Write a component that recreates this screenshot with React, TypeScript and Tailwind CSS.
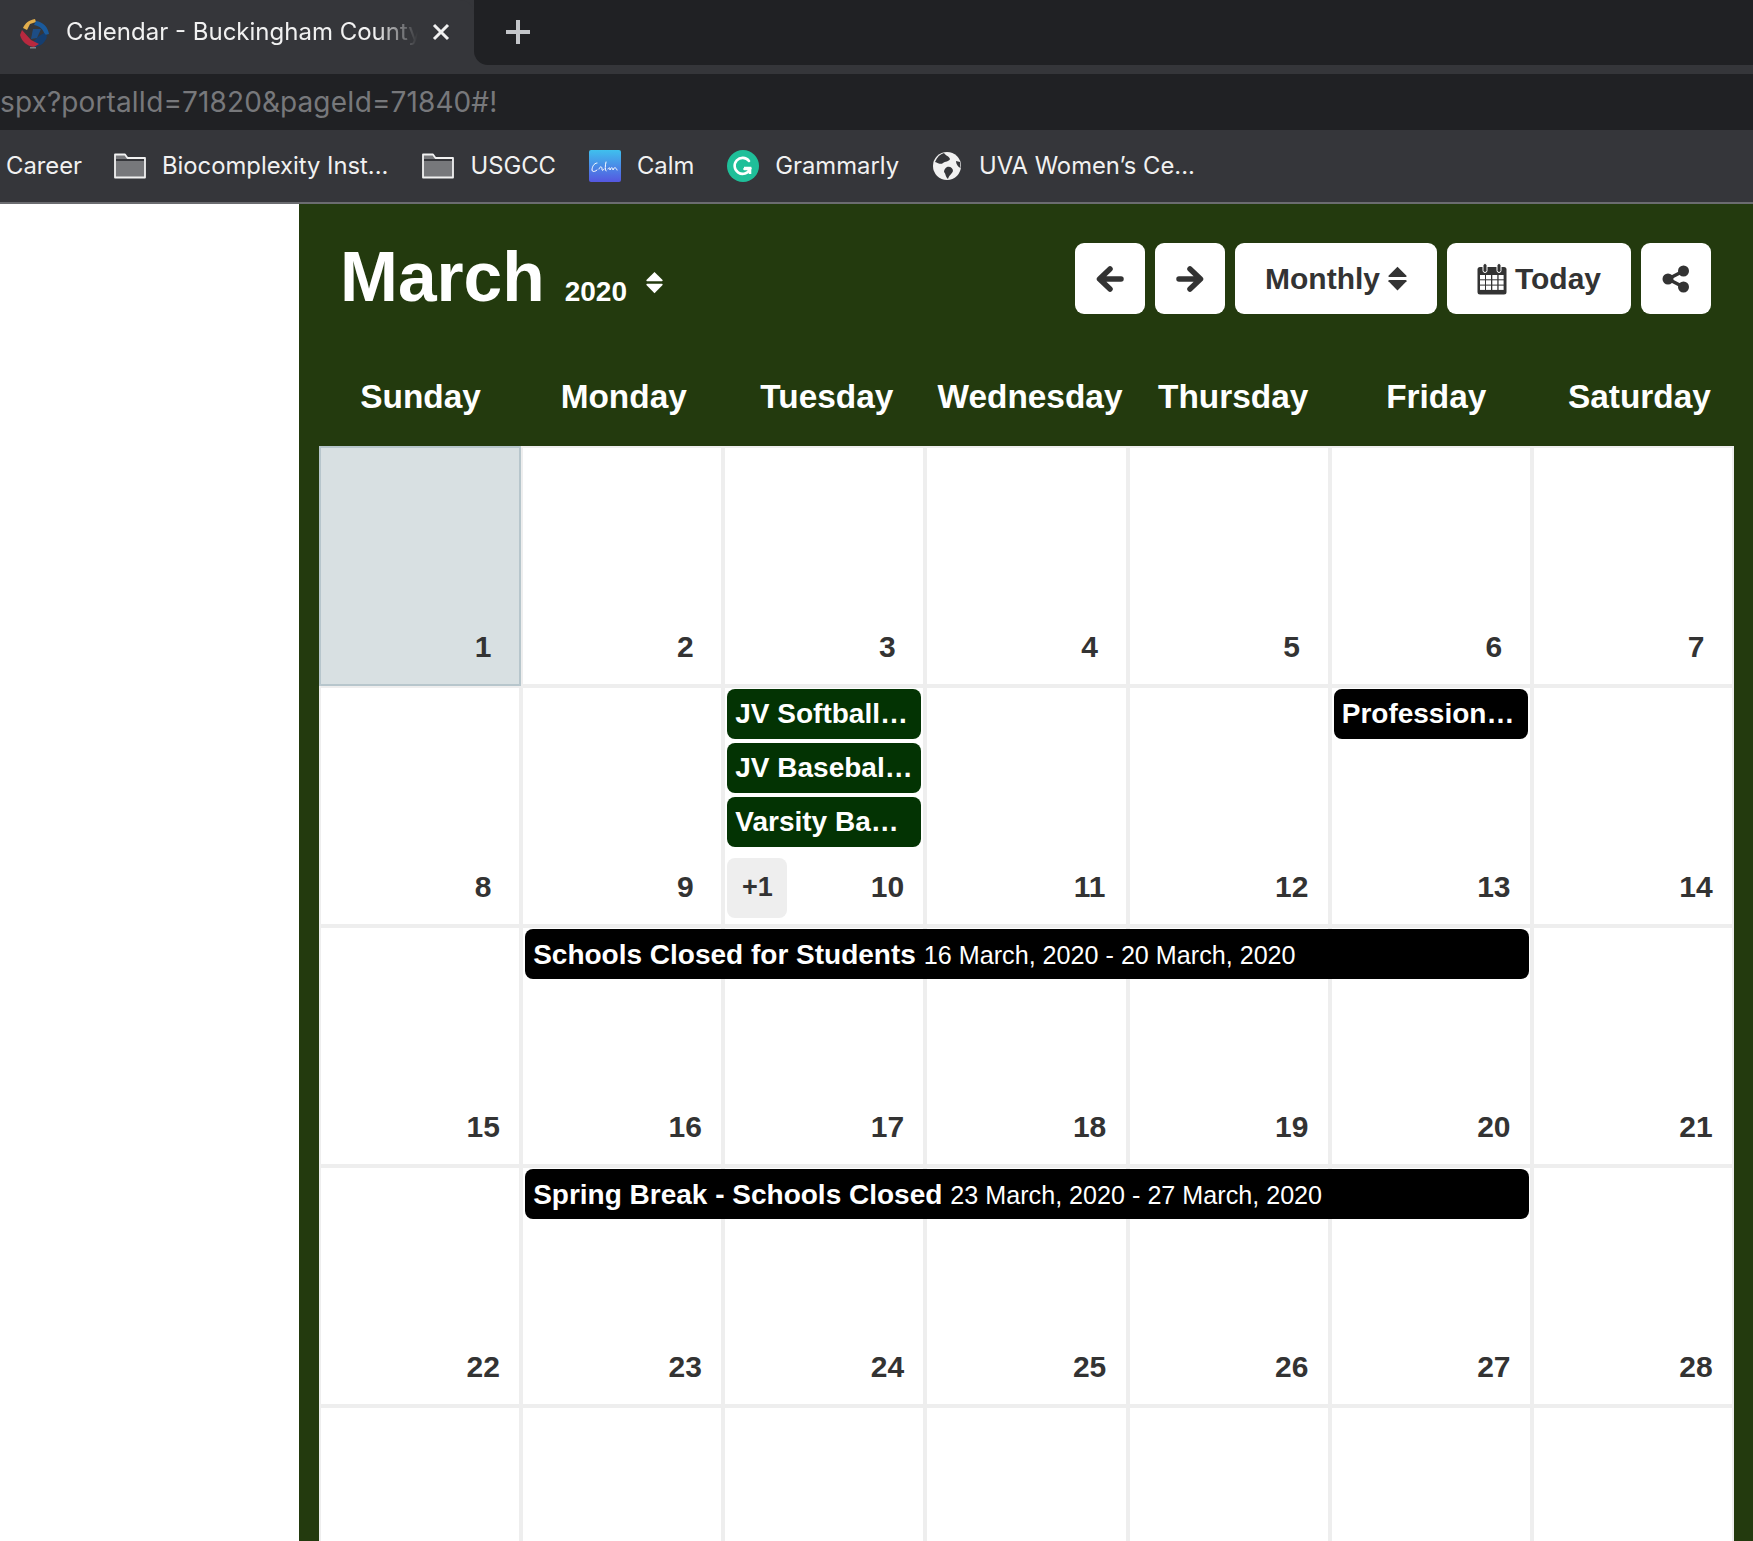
import React from 'react';

const chromeFont = "font-['Inter','Roboto',sans-serif]";

function Favicon() {
  return (
    <svg width="34" height="34" viewBox="0 0 34 34" fill="none" className="shrink-0">
      <path d="M6 13 C8 8 12 5 18 4 L19 7 L13 9 L10 15 Z" fill="#e2ae4c" />
      <path d="M19 6 C26 7 31 12 32 19 L28 20 C26 14 23 11 17 10 Z" fill="#1a5a9c" />
      <path d="M30 21 C29 27 24 31 18 32 L15 28 L22 21 L27 18 Z" fill="#153e70" />
      <path d="M16 14 L24 14 L20 23 L14 24 Z" fill="#1d4d85" />
      <path d="M3 20 L5 15 L14 25 L22 29 L17 32 C10 31 5 27 3 20 Z" fill="#b8293f" />
      <rect x="13" y="32" width="6" height="1.5" fill="#7d8187" />
    </svg>
  );
}

function FolderIcon() {
  return (
    <svg width="32" height="26" viewBox="0 0 32 26" fill="none" className="shrink-0">
      <path d="M1 24.5 V1.5 H11 L13.5 5 H31 V24.5 Z" fill="#77787b" stroke="#f1f1f1" strokeWidth="1.8" strokeLinejoin="round" />
      <path d="M2 6 H30 V8 H2 Z" fill="#35363a" />
    </svg>
  );
}

function CalmIcon() {
  return (
    <svg width="32" height="32" viewBox="0 0 32 32" className="shrink-0">
      <defs>
        <linearGradient id="calm" x1="0" y1="0" x2="0" y2="1">
          <stop offset="0" stopColor="#3fc0ee" />
          <stop offset="1" stopColor="#5557e0" />
        </linearGradient>
      </defs>
      <rect width="32" height="32" rx="2" fill="url(#calm)" />
      <path
        d="M8 13 C5 13 3 17 3 20 C3 22 6 22 8 20 M10 19 C11 16 13 16 13 19 C13 21 14 21 15 19 M17 12 C16 16 16 20 17 21 M19 19 C20 17 21 17 21 20 C22 17 24 17 24 20 C25 17 27 17 28 20"
        stroke="#fff"
        strokeWidth="1"
        fill="none"
        strokeLinecap="round"
      />
    </svg>
  );
}

function GrammarlyIcon() {
  return (
    <svg width="32" height="32" viewBox="0 0 32 32" className="shrink-0">
      <circle cx="16" cy="16" r="16" fill="#1fbf99" />
      <path d="M22 11 A8 8 0 1 0 23 19 H17.5" stroke="#fff" strokeWidth="2.6" fill="none" strokeLinecap="round" />
      <path d="M23 24 V18 H17" stroke="#fff" strokeWidth="2.6" fill="none" />
    </svg>
  );
}

function GlobeIcon() {
  return (
    <svg width="28" height="28" viewBox="0 0 28 28" className="shrink-0">
      <circle cx="14" cy="14" r="14" fill="#f1f1f1" />
      <path d="M11 1 C13 4 16 4 17 7 C16 10 12 9 10 11 C8 13 5 11 2 10 C4 5 7 2 11 1 Z" fill="#35363a" />
      <path d="M14 15 C17 14 20 16 20 19 C19 22 16 23 15 27 C12 24 13 22 11 20 C11 18 12 16 14 15 Z" fill="#35363a" />
      <path d="M23 9 L27 10 L27.5 16 C25 15 23 12 23 9 Z" fill="#35363a" />
    </svg>
  );
}

function ArrowLeft() {
  return (
    <svg width="28" height="28" viewBox="0 0 28 28" fill="none" stroke="#333" strokeWidth="5.500" strokeLinecap="round" strokeLinejoin="round">
      <path d="M25 14 H4 M14 4 L3.500 14 L14 24" />
    </svg>
  );
}

function ArrowRight() {
  return (
    <svg width="28" height="28" viewBox="0 0 28 28" fill="none" stroke="#333" strokeWidth="5.500" strokeLinecap="round" strokeLinejoin="round">
      <path d="M3 14 H24 M14 4 L24.500 14 L14 24" />
    </svg>
  );
}

function SortIcon({ color, w, h }: { color: string; w: number; h: number }) {
  return (
    <svg width={w} height={h} viewBox="0 0 20 26" fill={color} className="shrink-0">
      <path d="M10 0.500 L19.500 10 Q20 11.500 18.500 11.500 H1.500 Q0 11.500 0.500 10 Z" />
      <path d="M10 25.500 L19.500 16 Q20 14.500 18.500 14.500 H1.500 Q0 14.500 0.500 16 Z" />
    </svg>
  );
}

function CalendarIcon() {
  return (
    <svg width="30" height="32" viewBox="0 0 30 32" fill="none" className="shrink-0">
      <rect x="0.500" y="4" width="29" height="27.500" rx="2.500" fill="#333" />
      <rect x="6" y="0.500" width="4" height="9" rx="2" fill="#333" stroke="#fff" strokeWidth="1" />
      <rect x="20" y="0.500" width="4" height="9" rx="2" fill="#333" stroke="#fff" strokeWidth="1" />
      <g fill="#fff">
        {[3, 9, 15.300, 21.600].map((x) =>
          [12, 17.300, 22.600].map((y) => <rect key={`${x}-${y}`} x={x} y={y} width="5" height="4.300" />),
        )}
      </g>
    </svg>
  );
}

function ShareIcon() {
  return (
    <svg width="28" height="28" viewBox="0 0 28 28" fill="#333">
      <circle cx="21.500" cy="6" r="5.500" />
      <circle cx="21.500" cy="22" r="5.500" />
      <circle cx="6" cy="14" r="5.500" />
      <path d="M6 14 L21.500 6 M6 14 L21.500 22" stroke="#333" strokeWidth="3.500" />
    </svg>
  );
}

function Browser() {
  return (
    <div className={`${chromeFont} text-[#f1f1f1]`}>
      <div className="h-[74px] bg-[#35363a] flex">
        <div className="w-[474px] h-[74px] pl-[17px] pr-[20px] flex items-start pt-[15px] bg-[#35363a] rounded-tr-[14px]">
          <Favicon />
          <span className="ml-[15px] w-[352px] text-[24px] leading-[34px] whitespace-nowrap overflow-hidden [mask-image:linear-gradient(to_right,black_88%,transparent)]">
            Calendar - Buckingham County
          </span>
          <svg width="18" height="18" viewBox="0 0 18 18" className="ml-[14px] mt-[8px] shrink-0" stroke="#f1f1f1" strokeWidth="3">
            <path d="M2 2 L16 16 M16 2 L2 16" />
          </svg>
        </div>
        <div className="flex-1 h-[65px] bg-[#202124] rounded-bl-[14px] pl-[31px] pt-[19px]">
          <svg width="26" height="26" viewBox="0 0 26 26" stroke="#c4c6ca" strokeWidth="4">
            <path d="M13 1 V25 M1 13 H25" />
          </svg>
        </div>
      </div>
      <div className="h-[56px] bg-[#202124] flex items-center text-[#77787b] text-[28px] tracking-[0.1px] whitespace-nowrap">
        spx?portalId=71820&amp;pageId=71840#!
      </div>
      <div className="h-[72px] bg-[#35363a] flex items-center text-[23.800px] whitespace-nowrap pl-[6px]">
        <span>Career</span>
        <span className="ml-[32px] mr-[16px]"><FolderIcon /></span>
        <span>Biocomplexity Inst...</span>
        <span className="ml-[34px] mr-[16px]"><FolderIcon /></span>
        <span>USGCC</span>
        <span className="ml-[33px] mr-[16px]"><CalmIcon /></span>
        <span>Calm</span>
        <span className="ml-[33px] mr-[16px]"><GrammarlyIcon /></span>
        <span>Grammarly</span>
        <span className="ml-[34px] mr-[18px]"><GlobeIcon /></span>
        <span>UVA Women’s Ce...</span>
      </div>
      <div className="h-[2px] bg-[#6b6c70]" />
    </div>
  );
}

function HeaderButton({ className, children }: { className: string; children: React.ReactNode }) {
  return (
    <button className={`h-[71px] bg-white rounded-[9px] flex items-center justify-center gap-[8px] text-[#333] text-[30px] font-bold ${className}`}>
      {children}
    </button>
  );
}

const dayNames = ['Sunday', 'Monday', 'Tuesday', 'Wednesday', 'Thursday', 'Friday', 'Saturday'];
const colStarts = ['col-start-1', 'col-start-2', 'col-start-3', 'col-start-4', 'col-start-5', 'col-start-6', 'col-start-7'];

function DayCell({ day, today, col, more, children }: {
  day?: number;
  today?: boolean;
  col: number;
  more?: string;
  children?: React.ReactNode;
}) {
  return (
    <div className={`row-start-1 ${colStarts[col]} h-[240px] border-2 flex flex-col ${today ? 'bg-[#d8e0e2] border-[#b7c6cc]' : 'bg-white border-[#eeeeee]'}`}>
      <div className="flex-1 flex flex-col gap-[4px] pt-[1px] pl-[2px]">{children}</div>
      {day !== undefined && (
        <div className="h-[60px] mb-[6px] ml-[2px] flex items-center justify-between pr-[13px]">
          {more ? (
            <span className="w-[60px] h-[60px] rounded-[8px] bg-[#eeeeee] text-center text-[27px] leading-[58px] font-bold text-[#333]">{more}</span>
          ) : (
            <span />
          )}
          <span className="w-[46px] h-[60px] text-center text-[30px] leading-[57px] font-bold text-[#333]">{day}</span>
        </div>
      )}
    </div>
  );
}

function EventPill({ title, color }: { title: string; color: string }) {
  return (
    <div className={`h-[50px] w-[194px] shrink-0 rounded-[8px] px-[8px] text-white font-bold text-[28px] leading-[50px] truncate ${color}`}>
      {title}
    </div>
  );
}

function Week({ start, events, more, bar }: {
  start: number;
  events?: Record<number, React.ReactNode>;
  more?: Record<number, string>;
  bar?: { title: string; dates: string };
}) {
  return (
    <div className="grid grid-cols-7">
      {dayNames.map((name, i) => (
        <DayCell key={name} col={i} day={start + i} today={start + i === 1} more={more?.[i]}>
          {events?.[i]}
        </DayCell>
      ))}
      {bar && (
        <div className="row-start-1 col-start-2 col-span-5 self-start h-[50px] mt-[3px] ml-[4px] mr-[3px] bg-black rounded-[8px] px-[8px] text-white leading-[51px] whitespace-nowrap z-10">
          <span className="font-bold text-[28px]">{bar.title}</span>
          <span className="text-[25.150px] ml-[8px]">{bar.dates}</span>
        </div>
      )}
    </div>
  );
}

export default function App() {
  return (
    <div className="h-[1541px] overflow-hidden font-['Liberation_Sans',Arial,sans-serif] bg-white">
      <Browser />
      <div className="flex h-[1337px] overflow-hidden">
        <div className="w-[299px] bg-white shrink-0" />
        <div className="flex-1 bg-[#233a0e] pl-[20px] pr-[19px]">
          <div className="flex justify-between items-start pt-[39px] pr-[23px] h-[153px]">
            <div className="flex items-start pl-[21px] text-white font-bold">
              <span className="text-[69.500px] leading-[78px] -mt-[5px]">March</span>
              <span className="text-[28px] leading-[32px] ml-[20px] mt-[33px]">2020</span>
              <span className="ml-[19px] mt-[28px]"><SortIcon color="#fff" w={17} h={23} /></span>
            </div>
            <div className="flex gap-[10px]">
              <HeaderButton className="w-[70px]"><ArrowLeft /></HeaderButton>
              <HeaderButton className="w-[70px]"><ArrowRight /></HeaderButton>
              <HeaderButton className="w-[202px]">Monthly<SortIcon color="#333" w={19} h={25} /></HeaderButton>
              <HeaderButton className="w-[184px]"><CalendarIcon />Today</HeaderButton>
              <HeaderButton className="w-[70px]"><ShareIcon /></HeaderButton>
            </div>
          </div>
          <div className="grid grid-cols-7 h-[89px] items-start -mr-[7px]">
            {dayNames.map((d) => (
              <div key={d} className="text-center text-white font-bold text-[33.400px] leading-[38px] pt-[21px] whitespace-nowrap">
                {d}
              </div>
            ))}
          </div>
          <Week start={1} />
          <Week
            start={8}
            more={{ 2: '+1' }}
            events={{
              2: (
                <>
                  <EventPill title="JV Softball vs Cumberland" color="bg-[#033303]" />
                  <EventPill title="JV Baseball vs Cumberland" color="bg-[#033303]" />
                  <EventPill title="Varsity Baseball vs Cumberland" color="bg-[#033303]" />
                </>
              ),
              5: <EventPill title="Professional Development" color="bg-black" />,
            }}
          />
          <Week start={15} bar={{ title: 'Schools Closed for Students', dates: '16 March, 2020 - 20 March, 2020' }} />
          <Week start={22} bar={{ title: 'Spring Break - Schools Closed', dates: '23 March, 2020 - 27 March, 2020' }} />
          <div className="grid grid-cols-7">
            {dayNames.map((d, i) => (
              <DayCell key={d} col={i} />
            ))}
          </div>
        </div>
      </div>
    </div>
  );
}
